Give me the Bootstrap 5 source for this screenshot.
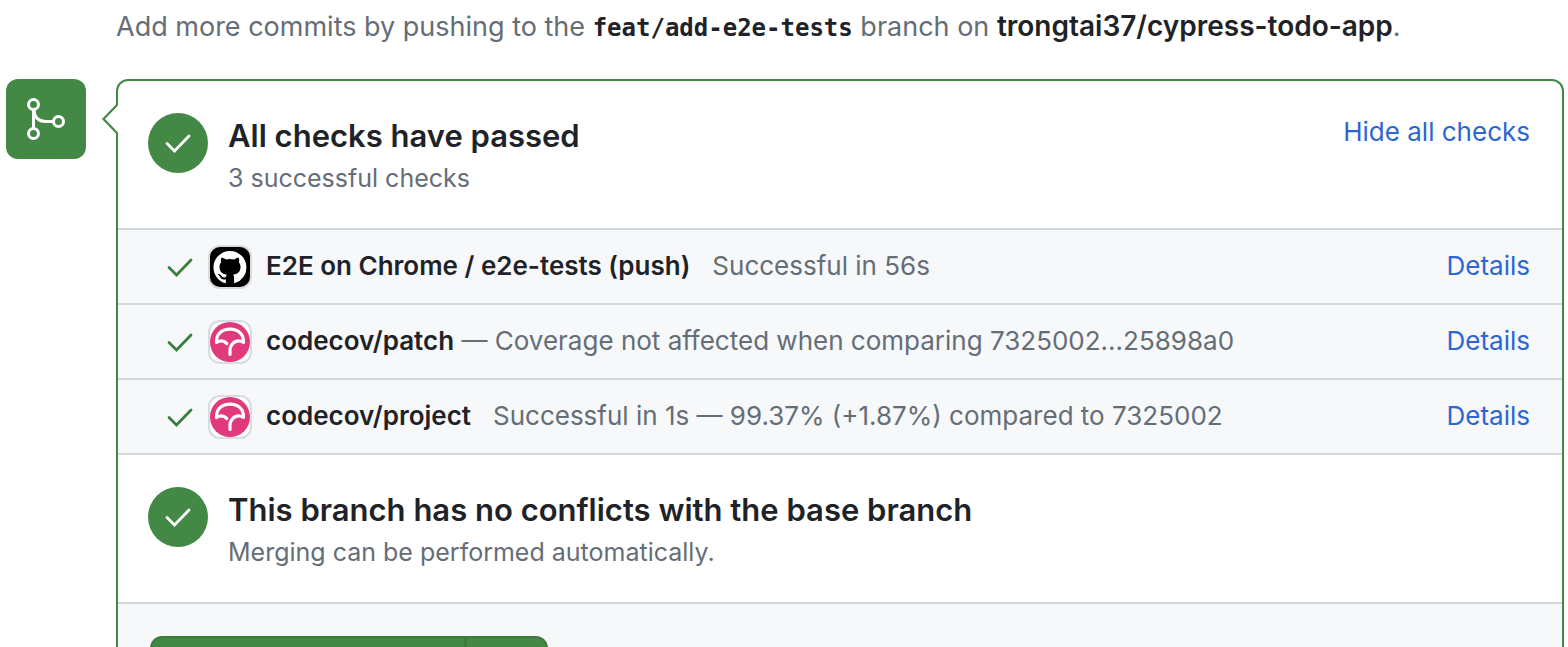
<!DOCTYPE html>
<html lang="en">
<head>
<meta charset="utf-8">
<meta name="viewport" content="width=device-width, initial-scale=1">
<title>Merge status</title>
<link href="https://cdn.jsdelivr.net/npm/bootstrap@5.3.0/dist/css/bootstrap.min.css" rel="stylesheet">
<style>
:root { --ok: #438845; --tick: #3b7f3f; --line: #d2d7de; --ink: #1f2328; --soft: #656d76; --panel: #f6f8fa; --blue: #2c66d3; }
body { font: 400 26px/40px Inter, "Liberation Sans", sans-serif; color: var(--soft); background: #fff; }
strong, h2 { font-weight: 600; color: var(--ink); }
.intro { font-size: 27px; padding: 7px 0 0 116px; margin-bottom: 32px; line-height: 40px; height: 47px; }
.intro strong { font-size: 28px; line-height: 36px; }
.intro code { font: 700 24px/36px "DejaVu Sans Mono", monospace; color: var(--ink); }
.timeline { gap: 30px; padding: 0 4px 0 6px; }
.merge-tile { width: 80px; height: 80px; border-radius: 12px; background: var(--ok); }
.merge-box { border: 2px solid var(--ok); border-radius: 12px; min-width: 0; }
.pointer { left: -17px; top: 22px; }
.status { padding: 32px 32px 30px 30px; gap: 20px; border-bottom: 2px solid var(--line); }
.status-dot { width: 60px; height: 60px; background: var(--ok); }
.status h2 { font-size: 31px; line-height: 46px; margin: 0; }
.status p { font-size: 25px; line-height: 39px; }
.status a { line-height: 38px; }
a { color: var(--blue); text-decoration: none; }
a:hover { text-decoration: underline; }
.check { height: 75px; padding: 0 32px 0 48px; background: var(--panel); border-bottom: 2px solid var(--line); }
.check > span, .check > a { padding-bottom: 2px; }
.check-tick { width: 28px; height: 28px; color: var(--tick); }
.avatar { width: 44px; height: 44px; margin: 0 14px; }
.actions { background: var(--panel); padding: 32px; border-radius: 0 0 10px 10px; }
.merge-btn { height: 64px; background: var(--ok); border: 2px solid #3d7a40; border-radius: 12px; }
.merge-btn:hover { background: #3d7a40; }
.merge-main { width: 316px; }
.merge-more { width: 83px; }
</style>
</head>
<body class="vh-100 overflow-hidden">
<svg class="d-none" xmlns="http://www.w3.org/2000/svg">
  <symbol id="tick" viewBox="0 0 28 28"><path d="M3 14.500l7.500 7.500L25 7" fill="none" stroke="currentColor" stroke-width="2.800" stroke-linecap="round" stroke-linejoin="miter"/></symbol>
  <symbol id="umbrella" viewBox="0 0 44 44">
    <rect x="1" y="1" width="42" height="42" rx="11" fill="#fff" stroke="#d8dbdf" stroke-width="2"/>
    <circle cx="22" cy="22" r="20" fill="#e0397c"/>
    <path d="M8.500 22.500C8 14 14 9.200 22 9.200S36 14 35.500 22.500C31.500 20 26.500 20.500 24 24.500Q22 27 22 30V34.500M8.500 22.500C12 20.400 16 20.700 18.800 23.500" fill="none" stroke="#fff" stroke-width="3.200" stroke-linecap="round" stroke-linejoin="round"/>
  </symbol>
</svg>
<p class="intro">Add more commits by pushing to the <code>feat/add-e2e-tests</code> branch on <strong>trongtai37/cypress-todo-app</strong>.</p>
<main class="timeline d-flex align-items-start">
  <div class="merge-tile flex-shrink-0">
    <svg class="d-block" width="80" height="80" viewBox="0 0 80 80" fill="none" stroke="#fff" stroke-width="3"><circle cx="27.500" cy="25.500" r="5"/><circle cx="27.500" cy="54.500" r="5"/><circle cx="52.500" cy="42.500" r="5"/><path d="M27.500 31v18M28 31c0 7 4.500 11.500 11.500 11.500h8"/></svg>
  </div>
  <section class="merge-box position-relative flex-grow-1">
    <svg class="pointer position-absolute" width="17" height="32" viewBox="0 0 17 32"><path d="M17 2v28L2 16z" fill="#fff"/><path d="M16 2L2.500 16 16 30" fill="none" stroke="#438845" stroke-width="2.200"/></svg>
    <div class="status d-flex align-items-start">
      <div class="status-dot rounded-circle d-flex align-items-center justify-content-center text-white flex-shrink-0"><svg width="28" height="28"><use href="#tick"/></svg></div>
      <div class="flex-grow-1"><h2>All checks have passed</h2><p class="mb-0">3 successful checks</p></div>
      <a href="#checks">Hide all checks</a>
    </div>
    <div id="checks">
      <div class="check d-flex align-items-center">
        <svg class="check-tick flex-shrink-0"><use href="#tick"/></svg>
        <svg class="avatar flex-shrink-0" viewBox="0 0 44 44"><rect x="1" y="1" width="42" height="42" rx="11" fill="#000" stroke="#d8dbdf" stroke-width="2"/><path transform="translate(5.500 6) scale(2.060)" fill="#fff" d="M8 0C3.580 0 0 3.580 0 8c0 3.540 2.290 6.530 5.470 7.590.4.070.55-.17.55-.38 0-.19-.01-.82-.01-1.490-2.010.37-2.530-.49-2.690-.94-.09-.23-.48-.94-.82-1.130-.28-.15-.68-.52-.01-.53.63-.01 1.080.58 1.230.82.72 1.210 1.870.87 2.330.66.07-.52.28-.87.51-1.070-1.780-.2-3.640-.89-3.640-3.950 0-.87.31-1.590.82-2.150-.08-.2-.36-1.020.08-2.120 0 0 .67-.21 2.200.82.64-.18 1.320-.27 2-.27s1.360.09 2 .27c1.530-1.040 2.200-.82 2.200-.82.44 1.100.16 1.920.08 2.120.51.56.82 1.270.82 2.150 0 3.070-1.870 3.750-3.650 3.950.29.25.54.73.54 1.480 0 1.070-.01 1.930-.01 2.200 0 .21.15.46.55.38A8.010 8.010 0 0 0 16 8c0-4.420-3.580-8-8-8z"/></svg>
        <span><strong>E2E on Chrome / e2e-tests (push)</strong> &nbsp; Successful in 56s</span>
        <a class="ms-auto" href="#details-e2e">Details</a>
      </div>
      <div class="check d-flex align-items-center">
        <svg class="check-tick flex-shrink-0"><use href="#tick"/></svg>
        <svg class="avatar flex-shrink-0"><use href="#umbrella"/></svg>
        <span><strong>codecov/patch</strong> — Coverage not affected when comparing 7325002...25898a0</span>
        <a class="ms-auto" href="#details-patch">Details</a>
      </div>
      <div class="check d-flex align-items-center">
        <svg class="check-tick flex-shrink-0"><use href="#tick"/></svg>
        <svg class="avatar flex-shrink-0"><use href="#umbrella"/></svg>
        <span><strong>codecov/project</strong> &nbsp; Successful in 1s — 99.37% (+1.87%) compared to 7325002</span>
        <a class="ms-auto" href="#details-project">Details</a>
      </div>
    </div>
    <div class="status d-flex align-items-start">
      <div class="status-dot rounded-circle d-flex align-items-center justify-content-center text-white flex-shrink-0"><svg width="28" height="28"><use href="#tick"/></svg></div>
      <div class="flex-grow-1"><h2>This branch has no conflicts with the base branch</h2><p class="mb-0">Merging can be performed automatically.</p></div>
    </div>
    <div class="actions">
      <div class="btn-group">
        <button type="button" class="btn merge-btn merge-main" aria-label="Merge"></button>
        <button type="button" class="btn merge-btn merge-more" aria-label="Options"></button>
      </div>
    </div>
  </section>
</main>
<script src="https://cdn.jsdelivr.net/npm/bootstrap@5.3.0/dist/js/bootstrap.bundle.min.js"></script>
</body>
</html>
